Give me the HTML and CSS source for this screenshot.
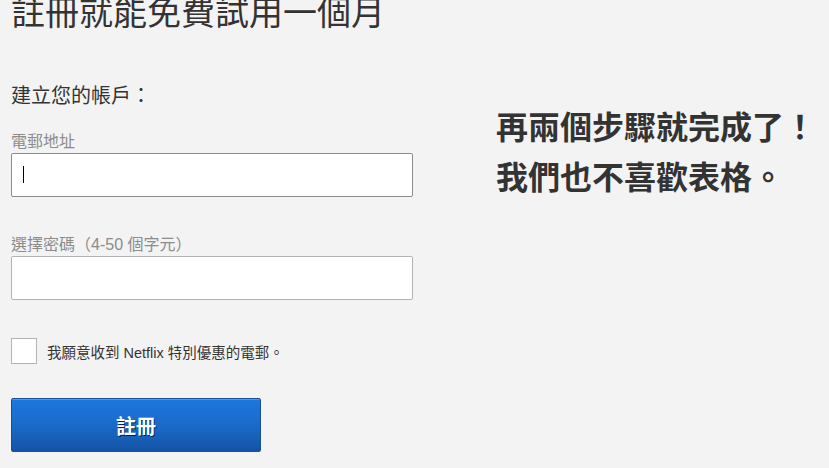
FILE: index.html
```html
<!DOCTYPE html>
<html lang="zh-Hant">
<head>
  <meta charset="UTF-8">
  <meta name="viewport" content="width=device-width, initial-scale=1.0">
  <title>註冊 - Netflix</title>
  <link rel="stylesheet" href="styles.css">
</head>
<body>
  <div class="page">
    <h1 class="title">註冊就能免費試用一個月</h1>

    <div class="content">
      <form class="signup-form" onsubmit="return false;">
        <h2 class="form-title">建立您的帳戶：</h2>

        <label class="field-label" for="email">電郵地址</label>
        <div class="input-wrap">
          <input type="text" id="email" class="field-input is-focused">
          <span class="caret"></span>
        </div>

        <label class="field-label field-label-pw" for="password">選擇密碼（4-50 個字元）</label>
        <div class="input-wrap">
          <input type="password" id="password" class="field-input">
        </div>

        <div class="checkbox-row">
          <input type="checkbox" id="offers" class="checkbox">
          <label for="offers" class="checkbox-label">我願意收到 Netflix 特別優惠的電郵。</label>
        </div>

        <button type="submit" class="btn-submit">註冊</button>
      </form>

      <aside class="side-note">
        <p>再兩個步驟就完成了！</p>
        <p>我們也不喜歡表格。</p>
      </aside>
    </div>
  </div>
</body>
</html>
```

FILE: styles.css
```css
:root {
  --background-color: #f3f3f3;
  --text-color: #333333;
  --label-color: #8c8c8c;
  --border-light: #b3b3b3;
  --border-focus: #8c8c8c;
}

* {
  margin: 0;
  padding: 0;
  box-sizing: border-box;
}

body {
  font-family: "Liberation Sans", "Noto Sans CJK TC", sans-serif;
  background-color: var(--background-color);
  color: var(--text-color);
  overflow: hidden;
}

.page {
  padding: 0 11px;
}

.title {
  font-size: 34px;
  font-weight: normal;
  line-height: 40px;
  margin-top: -7px;
}

.content {
  display: flex;
  gap: 83px;
}

.signup-form {
  width: 402px;
  display: flex;
  flex-direction: column;
}

.form-title {
  font-size: 20px;
  font-weight: normal;
  line-height: 24px;
  margin-top: 51px;
  margin-bottom: 24px;
}

.field-label {
  font-size: 16px;
  line-height: 20px;
  color: var(--label-color);
  margin-bottom: 1px;
}

.field-label-pw {
  margin-top: 38px;
}

.input-wrap {
  position: relative;
}

.field-input {
  width: 100%;
  height: 44px;
  border: 1px solid var(--border-light);
  border-radius: 2px;
  background-color: #ffffff;
  outline: none;
  font-size: 16px;
  padding: 0 11px;
}

.field-input.is-focused {
  border-color: var(--border-focus);
  caret-color: transparent;
}

.caret {
  position: absolute;
  left: 12px;
  top: 13px;
  width: 1px;
  height: 17px;
  background-color: #000000;
}

.checkbox-row {
  display: flex;
  align-items: center;
  gap: 10px;
  margin-top: 38px;
}

.checkbox {
  appearance: none;
  -webkit-appearance: none;
  width: 26px;
  height: 26px;
  border: 1px solid var(--border-light);
  background-color: #ffffff;
  margin: 0;
}

.checkbox-label {
  font-size: 14.5px;
  line-height: 20px;
  padding-top: 4px;
}

.btn-submit {
  width: 250px;
  height: 54px;
  margin-top: 34px;
  border: 1px solid #1a4f94;
  border-radius: 2px;
  background: linear-gradient(to bottom, #1c77dd 0%, #1a6bc9 50%, #1553a6 100%);
  box-shadow: inset 0 1px 0 rgba(255, 255, 255, 0.25);
  color: #ffffff;
  font-family: "Noto Sans CJK TC", sans-serif;
  font-size: 20px;
  font-weight: bold;
  text-shadow: 1px 1px 0 rgba(0, 0, 0, 0.7);
  cursor: pointer;
}

.side-note {
  margin-top: 67px;
  font-family: "Noto Sans CJK TC", sans-serif;
  font-size: 32px;
  font-weight: bold;
  line-height: 50px;
  white-space: nowrap;
}
```
